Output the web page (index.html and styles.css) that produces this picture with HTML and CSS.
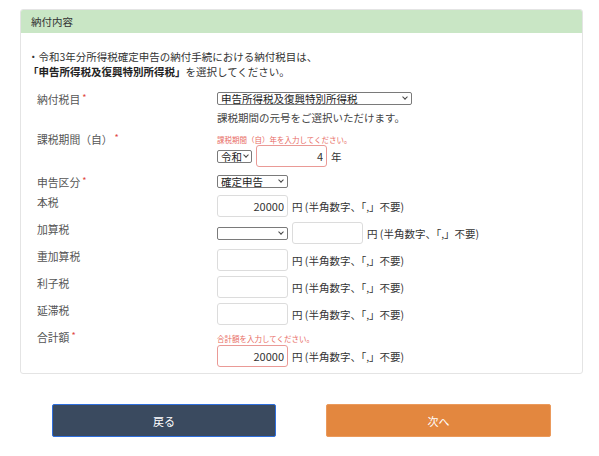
FILE: index.html
```html
<!DOCTYPE html>
<html lang="ja">
	<head>
		<meta charset="UTF-8">
		<title>納付内容</title>
		<link rel="stylesheet" href="styles.css">
	</head>
	<body>
		<div class="panel">
			<div class="panel-head">納付内容</div>
			<div class="panel-body">
				<p class="intro">・令和3年分所得税確定申告の納付手続における納付税目は、<br><b>「申告所得税及復興特別所得税」</b>を選択してください。</p>
				<div class="form">
					<div class="row">
						<div class="label">納付税目<span class="req">*</span></div>
						<div class="ctrl">
							<span class="sel w-long"><select><option>申告所得税及復興特別所得税</option></select></span>
							<p class="note">課税期間の元号をご選択いただけます。</p>
						</div>
					</div>
					<div class="row period">
						<div class="label">課税期間（自）<span class="req">*</span></div>
						<div class="ctrl">
							<p class="err">課税期間（自）年を入力してください。</p>
							<div class="line">
								<span class="sel w-era"><select><option>令和</option></select></span>
								<input class="num bad" type="text" value="4">
								<span class="unit">年</span>
							</div>
						</div>
					</div>
					<div class="row kind">
						<div class="label">申告区分<span class="req">*</span></div>
						<div class="ctrl">
							<span class="sel w-mid"><select><option>確定申告</option></select></span>
						</div>
					</div>
					<div class="row">
						<div class="label">本税</div>
						<div class="ctrl line">
							<input class="num" type="text" value="20000">
							<span class="unit">円 (半角数字、「,」不要)</span>
						</div>
					</div>
					<div class="row">
						<div class="label">加算税</div>
						<div class="ctrl line">
							<span class="sel w-mid"><select><option></option></select></span>
							<input class="num" type="text" value="">
							<span class="unit">円 (半角数字、「,」不要)</span>
						</div>
					</div>
					<div class="row">
						<div class="label">重加算税</div>
						<div class="ctrl line">
							<input class="num" type="text" value="">
							<span class="unit">円 (半角数字、「,」不要)</span>
						</div>
					</div>
					<div class="row">
						<div class="label">利子税</div>
						<div class="ctrl line">
							<input class="num" type="text" value="">
							<span class="unit">円 (半角数字、「,」不要)</span>
						</div>
					</div>
					<div class="row">
						<div class="label">延滞税</div>
						<div class="ctrl line">
							<input class="num" type="text" value="">
							<span class="unit">円 (半角数字、「,」不要)</span>
						</div>
					</div>
					<div class="row total">
						<div class="label">合計額<span class="req">*</span></div>
						<div class="ctrl">
							<p class="err">合計額を入力してください。</p>
							<div class="line">
								<input class="num bad" type="text" value="20000">
								<span class="unit">円 (半角数字、「,」不要)</span>
							</div>
						</div>
					</div>
				</div>
			</div>
		</div>
		<div class="buttons">
			<button class="btn btn-back">戻る</button>
			<button class="btn btn-next">次へ</button>
		</div>
	</body>
</html>
```

FILE: styles.css
```css
*{margin: 0;padding: 0;box-sizing: border-box;}
body{font-family: "Noto Sans CJK JP", "Noto Sans", sans-serif;font-size: 10.5px;color: #333;background: #fff;}

.panel{margin: 9px 16px 0 20px;border: 1px solid #e4e4e4;border-radius: 3px;overflow: hidden;}
.panel-head{height: 23px;line-height: 23px;padding-left: 10px;background: #c9e6c5;color: #333;}
.panel-body{padding: 16px 7px 6px;}
.intro{line-height: 15px;color: #333;}
.intro b{font-weight: bold;color: #222;}

.form{margin-top: 13px;padding-left: 9px;}
.row{display: flex;margin-bottom: 5px;}
.label{width: 180px;flex: none;line-height: 15px;color: #555;font-size: 10.8px;}
.req{color: #e0473f;font-size: 9px;vertical-align: top;margin-left: 2px;line-height: 12px;}
.ctrl{flex: 1;}
.line{display: flex;align-items: center;}

.note{margin-top: 5px;line-height: 15px;color: #444;}
.err{height: 13px;padding-top: 3px;font-size: 7.5px;line-height: 10px;color: #e86b63;}

.sel{display: block;position: relative;height: 13px;}
.sel select{appearance: none;-webkit-appearance: none;display: block;width: 100%;height: 13px;border: 1px solid #7a7a7a;border-radius: 2px;background: #fff;font: inherit;font-size: 10.5px;line-height: 11px;padding: 0 9px 0 3px;color: #222;}
.sel::after{content: "";position: absolute;right: 5px;top: 3px;width: 3px;height: 3px;border-right: 1px solid #444;border-bottom: 1px solid #444;transform: rotate(45deg);pointer-events: none;}
.w-long{width: 195px;}
.w-era{width: 35px;}
.w-era::after{right: 4px;}
.w-mid{width: 71px;}

.num{width: 71px;height: 22px;border: 1px solid #dcdcdc;border-radius: 3px;text-align: right;padding-right: 3px;font-family: inherit;font-size: 11px;color: #333;background: #fff;}
.num.bad{border-color: #ea9a96;}
.sel + .num{margin-left: 4px;}
.unit{margin-left: 4px;color: #333;white-space: nowrap;}

.period{margin-top: 7px;}
.kind{margin-top: 8px;}
.total .err{height: 15px;padding-top: 4px;}
.total{margin-bottom: 0;}

.buttons{display: flex;gap: 50px;margin: 30px 0 0 52px;}
.btn{width: 224px;height: 33px;border-radius: 2px;font-family: inherit;font-size: 11px;color: #fff;cursor: pointer;}
.btn-back{background: #3a4a5f;border: 1px solid #2f6fdd;}
.btn-next{width: 225px;background: #e3873f;border: 1px solid #eb9a5c;}
```
